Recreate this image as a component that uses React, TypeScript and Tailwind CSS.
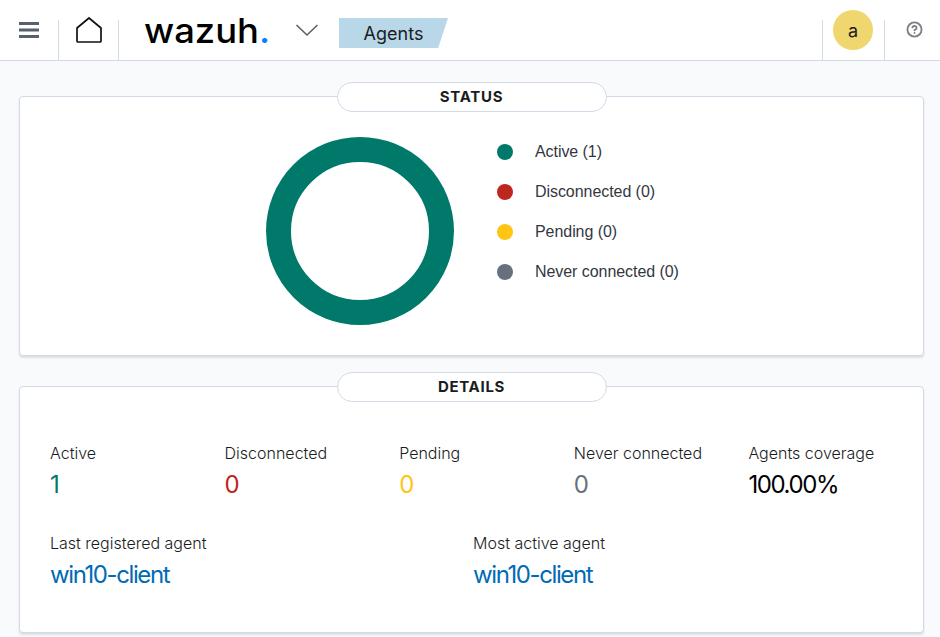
import { CircleHelp } from "lucide-react";

const legend = [
  { label: "Active (1)", color: "bg-[#00796b]" },
  { label: "Disconnected (0)", color: "bg-[#bd271e]" },
  { label: "Pending (0)", color: "bg-[#fec514]" },
  { label: "Never connected (0)", color: "bg-[#69707d]" },
];

const stats = [
  { label: "Active", value: "1", color: "text-[#00796b]" },
  { label: "Disconnected", value: "0", color: "text-[#bd271e]" },
  { label: "Pending", value: "0", color: "text-[#fec514]" },
  { label: "Never connected", value: "0", color: "text-[#69707d]" },
  { label: "Agents coverage", value: "100.00%", color: "text-black" },
];

function Stat({ label, value, color }: { label: string; value: string; color: string }) {
  return (
    <div className="flex flex-col">
      <span className="h-[20px] text-[16px] leading-[20px] font-light text-[#1a1c21]">{label}</span>
      <span className={`mt-[4px] h-[36px] text-[24px] leading-[36px] font-normal tracking-[-1.4px] ${color}`}>
        {value}
      </span>
    </div>
  );
}

function Pill({ title }: { title: string }) {
  return (
    <div className="absolute top-[-15px] left-[317px] flex h-[30px] w-[270px] items-center justify-center rounded-full border border-[#d3dae6] bg-white pr-[1px] text-[15px] font-bold tracking-[0.7px] text-[#1a1c21]">
      {title}
    </div>
  );
}

function Divider() {
  return <div className="mt-[20px] h-[40px] w-px bg-[#d3dae6]" />;
}

export default function App() {
  return (
    <div className="flex h-[637px] w-[940px] flex-col overflow-hidden bg-[#f9fafc] font-['Inter',sans-serif]">
      <header className="flex h-[61px] shrink-0 border-b border-[#d3dae6] bg-white">
        <div className="flex h-[60px] w-[58px] items-center justify-center">
          <svg width="20" height="16" viewBox="0 0 20 16" className="mb-[1px]">
            <rect x="0" y="0" width="20" height="3" fill="#5a606b" />
            <rect x="0" y="6.5" width="20" height="3" fill="#5a606b" />
            <rect x="0" y="13" width="20" height="3" fill="#5a606b" />
          </svg>
        </div>
        <Divider />
        <div className="flex h-[60px] w-[59px] items-center justify-center">
          <svg width="28" height="28" viewBox="0 0 28 28" fill="none">
            <path
              d="M2 12 L14 2 L26 12 V25 a1 1 0 0 1 -1 1 H3 a1 1 0 0 1 -1 -1 Z"
              stroke="#111"
              strokeWidth="1.7"
              strokeLinejoin="round"
            />
          </svg>
        </div>
        <Divider />
        <div className="ml-[25px] flex h-[60px] w-[126px] origin-left scale-x-[1.07] items-center text-[34px] font-medium text-black">
          <span className="mt-[1px] leading-none">wazuh</span>
          <span className="mt-[1px] leading-none text-[#0a7cff]">.</span>
        </div>
        <div className="ml-[25px] flex h-[60px] items-center">
          <svg width="24" height="14" viewBox="0 0 24 14" fill="none">
            <path d="M1.5 2 L12 12 L22.5 2" stroke="#5a606b" strokeWidth="1.6" />
          </svg>
        </div>
        <div className="mt-[18px] ml-[20px] flex h-[30px] w-[109px] items-center justify-center bg-[#b8d7e9] pt-[1px] text-[18px] text-[#1a1c21] [clip-path:polygon(0_0,100%_0,91%_100%,0_100%)]">
          Agents
        </div>
        <div className="flex-1" />
        <Divider />
        <div className="flex h-[60px] w-[61px] justify-center pt-[10px] pr-[1px]">
          <div className="flex size-[40px] items-center justify-center rounded-full bg-[#f0d66e] text-[18px] text-[#1a1c21]">
            a
          </div>
        </div>
        <Divider />
        <div className="flex h-[60px] w-[55px] items-center justify-end pr-[17px] pb-[1px]">
          <CircleHelp className="size-[17px] text-[#7b7f86]" strokeWidth={2.6} />
        </div>
      </header>

      <main className="flex flex-col px-[19px] pt-[35px]">
        <section className="relative h-[260px] w-[905px] rounded-[4px] border border-[#d3dae6] bg-white shadow-[0_2px_2px_rgba(152,162,179,0.3)]">
          <Pill title="STATUS" />
          <div className="flex items-start pt-[40px] pl-[246px]">
            <svg width="188" height="188" viewBox="0 0 188 188" className="shrink-0">
              <circle cx="94" cy="94" r="81.5" fill="none" stroke="#00796b" strokeWidth="25" />
            </svg>
            <ul className="ml-[43px] flex flex-col gap-[20px] pt-[5px] font-['Liberation_Sans',sans-serif] text-[16px] leading-[20px] tracking-[-0.06px] text-[#343741]">
              {legend.map((item) => (
                <li key={item.label} className="flex items-center">
                  <span className={`size-[16px] rounded-full ${item.color}`} />
                  <span className="ml-[22px]">{item.label}</span>
                </li>
              ))}
            </ul>
          </div>
        </section>

        <section className="relative mt-[30px] h-[247px] w-[905px] rounded-[4px] border border-[#d3dae6] bg-white pt-[56px] pl-[30px] shadow-[0_2px_2px_rgba(152,162,179,0.3)]">
          <Pill title="DETAILS" />
          <div className="grid grid-cols-[repeat(5,174.6px)]">
            {stats.map((s) => (
              <Stat key={s.label} {...s} />
            ))}
          </div>
          <div className="mt-[30px] grid grid-cols-[423px_1fr]">
            <Stat label="Last registered agent" value="win10-client" color="text-[#006bb4]" />
            <Stat label="Most active agent" value="win10-client" color="text-[#006bb4]" />
          </div>
        </section>
      </main>
    </div>
  );
}
